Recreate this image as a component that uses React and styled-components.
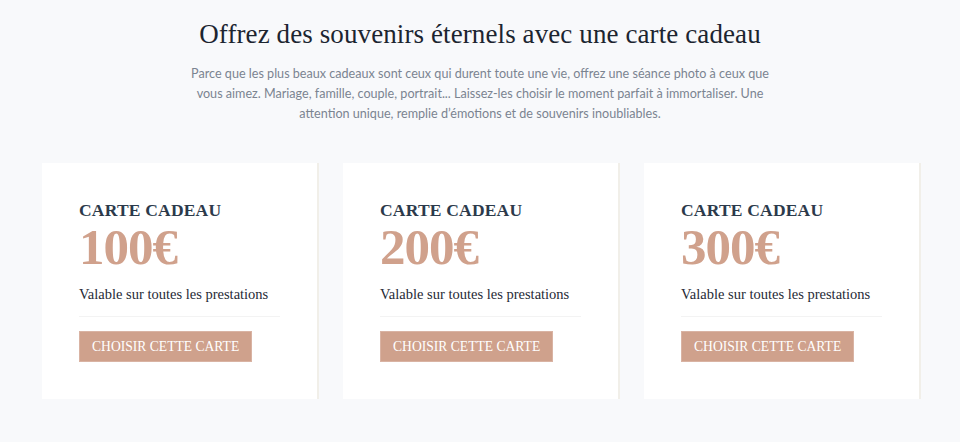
import React from "react";
import styled, { createGlobalStyle } from "styled-components";

const GlobalStyle = createGlobalStyle`
  html, body { margin: 0; padding: 0; background: #f8f9fb; }
  body { font-family: "Lato", "Liberation Sans", sans-serif; }
  * { box-sizing: border-box; }
`;

const Page = styled.main`
  width: 960px;
  height: 442px;
  padding-top: 18px;
  background: #f8f9fb;
  overflow: hidden;
`;

const Header = styled.header`
  display: flex;
  flex-direction: column;
  align-items: center;
  text-align: center;
`;

const Title = styled.h1`
  margin: 0;
  font-family: "Liberation Serif", serif;
  font-weight: 400;
  font-size: 27px;
  line-height: 32px;
  color: #1c2530;
  letter-spacing: 0.1px;
`;

const Lead = styled.p`
  margin: 14px 0 0;
  width: 584px;
  font-size: 12.6px;
  line-height: 20px;
  color: #7b8491;
`;

const Grid = styled.section`
  display: grid;
  grid-template-columns: repeat(3, 277px);
  column-gap: 24px;
  padding-left: 42px;
  margin-top: 39px;
`;

const Card = styled.article`
  background: #ffffff;
  border-right: 2px solid #f1efe9;
  padding: 36px 37px 37px;
  display: flex;
  flex-direction: column;
  align-items: flex-start;
`;

const CardLabel = styled.h2`
  margin: 0;
  font-family: "Liberation Serif", serif;
  font-weight: 700;
  font-size: 17.5px;
  line-height: 22px;
  letter-spacing: 0.2px;
  color: #2c3a4b;
`;

const Price = styled.div`
  margin-top: 1px;
  font-family: "Liberation Serif", serif;
  font-weight: 700;
  font-size: 51px;
  line-height: 50px;
  letter-spacing: -1px;
  color: #d0a18c;
`;

const Note = styled.p`
  margin: 13px 0 0;
  font-family: "Liberation Serif", serif;
  font-size: 14.5px;
  line-height: 18px;
  color: #1f2a36;
`;

const Divider = styled.hr`
  align-self: stretch;
  margin: 13px 0 0;
  border: 0;
  border-top: 1px solid #f3f3f3;
`;

const Button = styled.button`
  margin-top: 14px;
  height: 31px;
  padding: 0 12px;
  background: #cfa18c;
  border: 1px solid #d9b3a3;
  color: #ffffff;
  font-family: "Liberation Serif", serif;
  font-size: 13.6px;
  text-transform: uppercase;
  cursor: pointer;
`;

const cards = [100, 200, 300];

export default function App() {
  return (
    <Page>
      <GlobalStyle />
      <Header>
        <Title>Offrez des souvenirs éternels avec une carte cadeau</Title>
        <Lead>
          Parce que les plus beaux cadeaux sont ceux qui durent toute une vie, offrez une séance photo à ceux que
          vous aimez. Mariage, famille, couple, portrait... Laissez-les choisir le moment parfait à immortaliser. Une
          attention unique, remplie d’émotions et de souvenirs inoubliables.
        </Lead>
      </Header>
      <Grid>
        {cards.map((v) => (
          <Card key={v}>
            <CardLabel>CARTE CADEAU</CardLabel>
            <Price>{v}€</Price>
            <Note>Valable sur toutes les prestations</Note>
            <Divider />
            <Button>Choisir cette carte</Button>
          </Card>
        ))}
      </Grid>
    </Page>
  );
}
